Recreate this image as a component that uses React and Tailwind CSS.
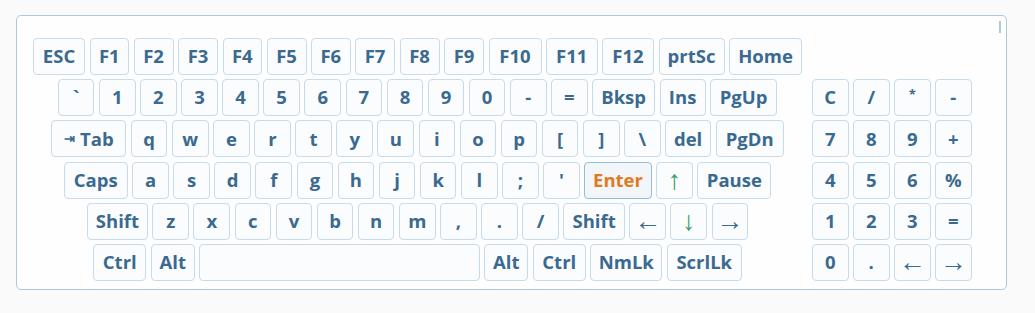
import React from 'react'

// [label, width class, kind]
const mainRows = [
  [
    ['ESC', 'w-[52px]'], ['F1', 'w-[39.5px]'], ['F2', 'w-[40px]'], ['F3', 'w-[40px]'],
    ['F4', 'w-[39.5px]'], ['F5', 'w-[40px]'], ['F6', 'w-[39.5px]'], ['F7', 'w-[40px]'],
    ['F8', 'w-[40px]'], ['F9', 'w-[40px]'], ['F10', 'w-[53px]'], ['F11', 'w-[51.5px]'],
    ['F12', 'w-[52px]'], ['prtSc', 'w-[66px]'], ['Home', 'w-[73px]'],
  ],
  [
    ['`', 'w-[36.6px]'], ['1', 'w-[36.6px]'], ['2', 'w-[36.6px]'], ['3', 'w-[36.6px]'],
    ['4', 'w-[36.6px]'], ['5', 'w-[36.6px]'], ['6', 'w-[36.6px]'], ['7', 'w-[36.6px]'],
    ['8', 'w-[36.6px]'], ['9', 'w-[36.6px]'], ['0', 'w-[36.6px]'], ['-', 'w-[36.6px]'],
    ['=', 'w-[36.6px]'], ['Bksp', 'w-[63px]'], ['Ins', 'w-[46px]'], ['PgUp', 'w-[67px]'],
  ],
  [
    ['tab', 'w-[75px]', 'tab'], ['q', 'w-[36.6px]'], ['w', 'w-[36.6px]'], ['e', 'w-[36.6px]'],
    ['r', 'w-[36.6px]'], ['t', 'w-[36.6px]'], ['y', 'w-[36.6px]'], ['u', 'w-[36.6px]'],
    ['i', 'w-[36.6px]'], ['o', 'w-[36.6px]'], ['p', 'w-[36.6px]'], ['[', 'w-[36.6px]'],
    [']', 'w-[36.6px]'], ['\\', 'w-[36.6px]'], ['del', 'w-[46px]'], ['PgDn', 'w-[68px]'],
  ],
  [
    ['Caps', 'w-[64px]'], ['a', 'w-[36.6px]'], ['s', 'w-[36.6px]'], ['d', 'w-[36.6px]'],
    ['f', 'w-[36.6px]'], ['g', 'w-[36.6px]'], ['h', 'w-[36.6px]'], ['j', 'w-[36.6px]'],
    ['k', 'w-[36.6px]'], ['l', 'w-[36.6px]'], [';', 'w-[36.6px]'], ["'", 'w-[36.6px]'],
    ['Enter', 'w-[67.5px]', 'enter'], ['↑', 'w-[36.6px]', 'green'], ['Pause', 'w-[74px]'],
  ],
  [
    ['Shift', 'w-[61px]'], ['z', 'w-[36.6px]'], ['x', 'w-[36.6px]'], ['c', 'w-[36.6px]'],
    ['v', 'w-[36.6px]'], ['b', 'w-[36.6px]'], ['n', 'w-[36.6px]'], ['m', 'w-[36.6px]'],
    [',', 'w-[36.6px]'], ['.', 'w-[36.6px]'], ['/', 'w-[36.6px]'], ['Shift', 'w-[61.5px]'],
    ['←', 'w-[36.6px]', 'arrow'], ['↓', 'w-[36.6px]', 'green'], ['→', 'w-[36.6px]', 'arrow'],
  ],
  [
    ['Ctrl', 'w-[53px]'], ['Alt', 'w-[44px]'], ['', 'w-[280.5px]'], ['Alt', 'w-[44px]'],
    ['Ctrl', 'w-[53px]'], ['NmLk', 'w-[72px]'], ['ScrlLk', 'w-[75px]'],
  ],
]

const numpad = [
  ['C', ''], ['/', ''], ['*', 'star'], ['-', ''],
  ['7', ''], ['8', ''], ['9', ''], ['+', ''],
  ['4', ''], ['5', ''], ['6', ''], ['%', ''],
  ['1', ''], ['2', ''], ['3', ''], ['=', ''],
  ['0', ''], ['.', ''], ['←', 'arrow'], ['→', 'arrow'],
]

const Key = ({ label, w, kind }) => {
  let tone = 'border-[#c6dbec] bg-[#fbfcfd] text-[#3a6a8f] font-bold text-[18.5px]'
  if (kind === 'enter') tone = 'border-[#8dbde3] bg-[#f3f6f9] text-[#e17a1d] font-bold text-[18.5px]'
  if (kind === 'green') tone = "border-[#c6dbec] bg-[#fbfcfd] text-[#3c9a62] font-normal text-[27px] font-['Liberation_Sans',sans-serif]"
  if (kind === 'arrow') tone = "border-[#c6dbec] bg-[#fbfcfd] text-[#3a6a8f] font-normal text-[27px] font-['Liberation_Sans',sans-serif]"
  if (kind === 'star') tone = 'border-[#c6dbec] bg-[#fbfcfd] text-[#3a6a8f] font-bold text-[13px] pb-[6px]'
  if (kind === 'tab') tone = 'border-[#c6dbec] bg-[#fbfcfd] text-[#3a6a8f] font-bold text-[18.5px] gap-[5px]'
  return (
    <div className={`flex h-[37px] shrink-0 items-center justify-center rounded-[4px] border leading-none ${tone} ${w}`}>
      {kind === 'tab' ? (
        <>
          <span className="text-[13px]">⇥</span>
          <span>Tab</span>
        </>
      ) : (
        label
      )}
    </div>
  )
}

export default function App() {
  return (
    <div className="min-h-[313px] bg-[#fafafa] pt-[15px] pl-[16px] font-['Open_Sans',sans-serif]">
      <div className="relative flex h-[275px] w-[991px] rounded-[5px] border border-[#a9c9e0] bg-[#fefefe] pt-[22px] pl-[16px]">
        {/* resize handle */}
        <div className="absolute right-[5px] top-[5px] h-[12px] w-[2px] bg-[#a9c9e0]" />

        {/* MAIN BLOCK */}
        <div className="flex w-[769px] flex-col items-center gap-[4.2px]">
          {mainRows.map((row, i) => (
            <div key={i} className="flex gap-[4.5px]">
              {row.map(([label, w, kind], j) => (
                <Key key={j} label={label} w={w} kind={kind} />
              ))}
            </div>
          ))}
        </div>

        {/* NUMPAD */}
        <div className="ml-[10px] mt-[41.2px] grid grid-cols-4 gap-x-[4.5px] gap-y-[4.2px] self-start">
          {numpad.map(([label, kind], i) => (
            <Key key={i} label={label} w="w-[36.5px]" kind={kind || undefined} />
          ))}
        </div>
      </div>
    </div>
  )
}
